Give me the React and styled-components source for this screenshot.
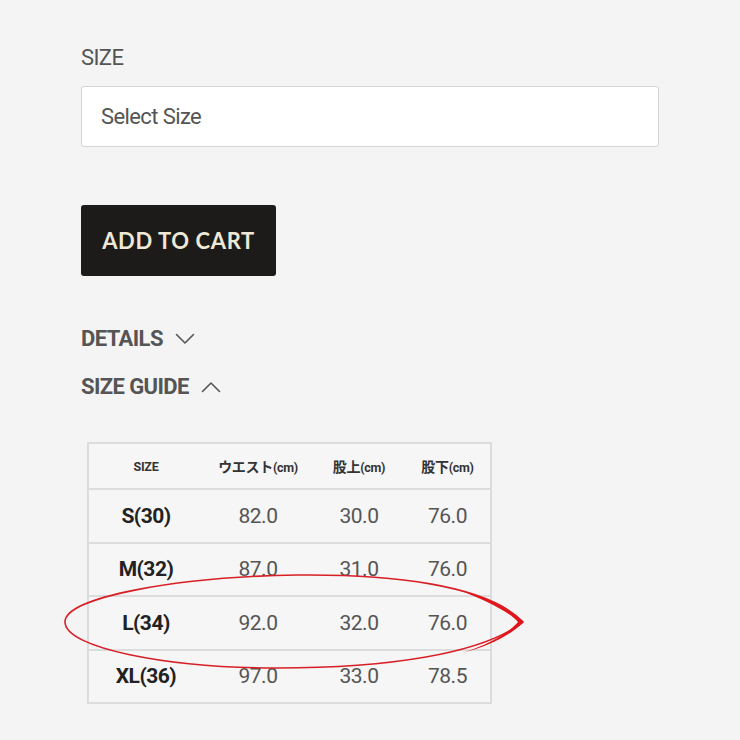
import React from "react";
import styled, { createGlobalStyle } from "styled-components";

const Global = createGlobalStyle`
  html, body { margin: 0; padding: 0; background: #f4f4f4; }
  body { font-family: Roboto, "Noto Sans CJK JP", sans-serif; color: #555; }
`;

const Page = styled.div`
  width: 740px;
  height: 740px;
  box-sizing: border-box;
  padding: 46px 81px 0 81px;
  display: flex;
  flex-direction: column;
  overflow: hidden;
`;

const Label = styled.div`
  font-size: 22px;
  letter-spacing: -0.6px;
  color: #555;
  line-height: 24px;
`;

const Select = styled.div`
  margin-top: 16px;
  width: 578px;
  height: 61px;
  box-sizing: border-box;
  background: #fff;
  border: 1px solid #d4d4d4;
  border-radius: 3px;
  display: flex;
  align-items: center;
  padding-left: 19px;
  font-size: 22px;
  letter-spacing: -0.6px;
  color: #555;
`;

const CartButton = styled.div`
  margin-top: 58px;
  width: 195px;
  height: 71px;
  background: #1d1b19;
  border-radius: 3px;
  display: flex;
  align-items: center;
  justify-content: center;
  font-family: Lato, sans-serif;
  font-weight: 700;
  font-size: 22px;
  letter-spacing: 0.6px;
  color: #eee9d6;
`;

const Toggle = styled.div`
  display: flex;
  align-items: center;
  gap: 12px;
  margin-top: ${(p) => p.$top}px;
  font-weight: 700;
  font-size: 22px;
  letter-spacing: -0.6px;
  color: #555;
  line-height: 24px;
`;

const TableWrap = styled.div`
  position: relative;
  margin-top: 43px;
  margin-left: 6px;
  width: 405px;
`;

const Table = styled.div`
  border: 2px solid #dcdcdc;
  background: #f6f6f6;
  display: grid;
  grid-template-columns: 114px 110px 92px 85px;
`;

const Cell = styled.div`
  height: ${(p) => (p.$head ? 44 : 51.5)}px;
  display: flex;
  align-items: center;
  justify-content: center;
  border-top: ${(p) => (p.$first ? "none" : "2px solid #dcdcdc")};
  font-size: ${(p) => (p.$head ? 14 : 21)}px;
  font-weight: ${(p) => (p.$bold ? 700 : 400)};
  color: ${(p) => (p.$bold ? "#222" : "#555")};
  letter-spacing: ${(p) => (p.$head ? "-0.3px" : "-0.5px")};
  white-space: nowrap;
`;

const HeadText = styled.span`
  font-size: 14px;
  font-weight: 700;
  color: #333;
`;

const Small = styled.span`
  font-size: ${(p) => p.$size || 12.5}px;
`;

const Overlay = styled.svg`
  position: absolute;
  left: -30px;
  top: 120px;
  overflow: visible;
  pointer-events: none;
`;

const Chevron = ({ up }) => (
  <svg width="20" height="12" viewBox="0 0 20 12" fill="none">
    <path
      d={up ? "M1.5 10.5 L10 2 L18.5 10.5" : "M1.5 1.5 L10 10 L18.5 1.5"}
      stroke="#555"
      strokeWidth="1.6"
      strokeLinecap="round"
      strokeLinejoin="round"
    />
  </svg>
);

const rows = [
  ["S(30)", "82.0", "30.0", "76.0"],
  ["M(32)", "87.0", "31.0", "76.0"],
  ["L(34)", "92.0", "32.0", "76.0"],
  ["XL(36)", "97.0", "33.0", "78.5"],
];

const heads = [
  ["", "SIZE"],
  ["ウエスト", "(cm)"],
  ["股上", "(cm)"],
  ["股下", "(cm)"],
];

export default function App() {
  return (
    <Page>
      <Global />
      <Label>SIZE</Label>
      <Select>Select Size</Select>
      <CartButton>ADD TO CART</CartButton>
      <Toggle $top={51}>
        DETAILS <Chevron />
      </Toggle>
      <Toggle $top={24}>
        SIZE GUIDE <Chevron up />
      </Toggle>
      <TableWrap>
        <Table>
          {heads.map(([jp, unit]) => (
            <Cell key={unit + jp} $head $bold $first>
              <HeadText>
                {jp}
                <Small $size={jp ? 12.5 : 12.5}>{unit}</Small>
              </HeadText>
            </Cell>
          ))}
          {rows.map((r) =>
            r.map((v, i) => (
              <Cell key={r[0] + i} $bold={i === 0}>
                {v}
              </Cell>
            ))
          )}
        </Table>
        <Overlay width="500" height="120" viewBox="0 0 500 120">
          <path
            d="M466 60 C430 22 330 12 240 13 C120 15 8 35 8 60 C8 86 110 106 220 106 C330 106 425 92 466 60"
            stroke="#d81f26"
            strokeWidth="1.6"
            fill="none"
          />
          <path
            d="M467 60 C452 46 430 36 405 29 C432 40 452 50 461 60 C452 71 432 82 405 91 C432 84 452 74 467 60 Z"
            fill="#e0141b"
          />
        </Overlay>
      </TableWrap>
    </Page>
  );
}
